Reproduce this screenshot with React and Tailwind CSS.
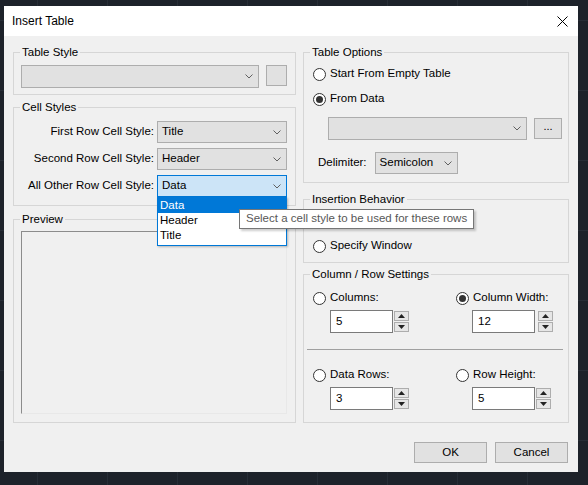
import React from "react";

function Chevron() {
  return (
    <svg width="8" height="5" viewBox="0 0 8 5" className="shrink-0">
      <path d="M0.5 0.5 L4 4 L7.5 0.5" fill="none" stroke="#606060" strokeWidth="1" />
    </svg>
  );
}

function Combo({ value, className = "", active = false }) {
  return (
    <div
      className={`flex items-center justify-between border pl-[4px] pr-[5px] ${
        active ? "bg-[#cce4f7] border-[#0078d7]" : "bg-[#e1e1e1] border-[#adadad]"
      } ${className}`}
    >
      <span className="leading-none">{value}</span>
      <Chevron />
    </div>
  );
}

function Radio({ checked, label }) {
  return (
    <div className="flex h-[16px] items-center gap-[4px]">
      <div className="flex h-[13px] w-[13px] items-center justify-center rounded-full border border-[#333] bg-white">
        {checked && <div className="h-[7px] w-[7px] rounded-full bg-[#333]" />}
      </div>
      {label && <span>{label}</span>}
    </div>
  );
}

function Tri({ up }) {
  return (
    <svg width="7" height="4" viewBox="0 0 7 4">
      <path d={up ? "M0 4 L3.5 0 L7 4 Z" : "M0 0 L3.5 4 L7 0 Z"} fill="#222" />
    </svg>
  );
}

function Spinner({ value, spinGap = "ml-px" }) {
  return (
    <div className="flex h-[23px]">
      <div className="flex h-full w-[63px] items-center border border-[#7a7a7a] bg-white pl-[5px]">
        {value}
      </div>
      <div className={`flex h-full w-[15px] flex-col gap-px py-[1px] ${spinGap}`}>
        <div className="flex flex-1 items-center justify-center border border-[#adadad] bg-[#e6e6e6]">
          <Tri up />
        </div>
        <div className="flex flex-1 items-center justify-center border border-[#adadad] bg-[#e6e6e6]">
          <Tri />
        </div>
      </div>
    </div>
  );
}

function Group({ title, className = "", inner = "", children }) {
  return (
    <fieldset className={`border border-[#d6d6d6] ${className}`}>
      <legend className="ml-[6px] px-[2px] leading-[14px]">{title}</legend>
      <div className={inner}>{children}</div>
    </fieldset>
  );
}

export default function App() {
  return (
    <div className="relative h-[485px] w-[588px] overflow-hidden bg-[#1d222a] bg-[image:linear-gradient(to_right,#272d36_1px,transparent_1px),linear-gradient(to_bottom,#272d36_1px,transparent_1px)] bg-[size:70px_70px] bg-[position:37px_20px] pl-[4px] pt-[6px] font-['Liberation_Sans',Arial,sans-serif] text-[11.5px] text-black">
      <div className="flex h-[466px] w-[574px] flex-col bg-[#f0f0f0]">
        {/* Title bar */}
        <div className="flex h-[30px] items-center justify-between bg-white pl-[8px] pr-[10px]">
          <span className="text-[12px]">Insert Table</span>
          <svg width="11" height="11" viewBox="0 0 11 11">
            <path d="M0.5 0.5 L10.5 10.5 M10.5 0.5 L0.5 10.5" stroke="#000" strokeWidth="1" />
          </svg>
        </div>

        <div className="flex flex-1 flex-col px-[9px] pt-[9px]">
          <div className="flex gap-[7px]">
            {/* Left column */}
            <div className="flex w-[283px] flex-col">
              <Group title="Table Style" className="h-[50px]" inner="pl-[7px] pt-[6px]">
                <div className="flex items-start gap-[7px]">
                  <Combo value="" className="h-[23px] w-[238px]" />
                  <div className="h-[21px] w-[21px] border border-[#adadad] bg-[#e1e1e1]" />
                </div>
              </Group>

              <Group title="Cell Styles" className="mt-[5px] h-[106px]" inner="pr-[8px] pt-[7px]">
                <div className="flex flex-col gap-[5px]">
                  <div className="flex items-center justify-end gap-[3px]">
                    <span>First Row Cell Style:</span>
                    <Combo value="Title" className="h-[22px] w-[130px]" />
                  </div>
                  <div className="flex items-center justify-end gap-[3px]">
                    <span>Second Row Cell Style:</span>
                    <Combo value="Header" className="h-[22px] w-[130px]" />
                  </div>
                  <div className="flex items-center justify-end gap-[3px]">
                    <span>All Other Row Cell Style:</span>
                    <div className="relative">
                      <Combo value="Data" active className="h-[22px] w-[130px]" />
                      <div className="absolute left-0 top-full z-10 flex w-[130px] flex-col border border-[#0078d7] bg-white pb-[2px] shadow-[1px_1px_2px_rgba(0,0,0,0.25)]">
                        <div className="flex h-[15px] items-center bg-[#0078d7] pl-[2px] text-white">Data</div>
                        <div className="flex h-[15px] items-center pl-[2px]">Header</div>
                        <div className="flex h-[15px] items-center pl-[2px]">Title</div>
                      </div>
                    </div>
                  </div>
                </div>
              </Group>

              <Group title="Preview" className="mt-[6px] h-[211px]" inner="pl-[7px] pr-[8px] pt-[5px]">
                <div className="h-[183px] border border-b-[#e8e8e8] border-l-[#8c8c8c] border-r-[#e8e8e8] border-t-[#8c8c8c]" />
              </Group>
            </div>

            {/* Right column */}
            <div className="flex w-[266px] flex-col">
              <Group title="Table Options" className="h-[138px]" inner="pl-[9px] pt-[7px]">
                <div className="flex flex-col gap-[9px]">
                  <Radio label="Start From Empty Table" />
                  <Radio checked label="From Data" />
                </div>
                <div className="mt-[10px] flex items-center gap-[7px] pl-[15px]">
                  <Combo value="" className="h-[23px] w-[199px]" />
                  <div className="flex h-[21px] w-[28px] items-center justify-center border border-[#adadad] bg-[#e1e1e1] pb-[4px] text-[11px]">
                    ...
                  </div>
                </div>
                <div className="mt-[12px] flex items-center gap-[8px] pl-[5px]">
                  <span>Delimiter:</span>
                  <Combo value="Semicolon" className="h-[22px] w-[83px]" />
                </div>
              </Group>

              <Group title="Insertion Behavior" className="mt-[9px] h-[71px]" inner="pl-[9px] pt-[7px]">
                <div className="flex flex-col gap-[9px]">
                  <Radio />
                  <Radio label="Specify Window" />
                </div>
              </Group>

              <Group title="Column / Row Settings" className="mt-[4px] h-[156px]" inner="pl-[9px] pr-[5px] pt-[9px]">
                <div className="grid grid-cols-[143px_1fr]">
                  <div className="flex flex-col gap-[4px]">
                    <Radio label="Columns:" />
                    <div className="pl-[17px]">
                      <Spinner value="5" />
                    </div>
                  </div>
                  <div className="flex flex-col gap-[4px]">
                    <Radio checked label="Column Width:" />
                    <div className="pl-[16px]">
                      <Spinner value="12" spinGap="ml-[3px]" />
                    </div>
                  </div>
                </div>
                <div className="ml-[-6px] mt-[16px] h-px bg-[#a0a0a0]" />
                <div className="mt-[17px] grid grid-cols-[143px_1fr]">
                  <div className="flex flex-col gap-[4px]">
                    <Radio label="Data Rows:" />
                    <div className="pl-[17px]">
                      <Spinner value="3" />
                    </div>
                  </div>
                  <div className="flex flex-col gap-[4px]">
                    <Radio label="Row Height:" />
                    <div className="pl-[16px]">
                      <Spinner value="5" />
                    </div>
                  </div>
                </div>
              </Group>
            </div>
          </div>

          <div className="mt-[19px] flex justify-end gap-[8px] pr-[1px]">
            <button className="flex h-[21px] w-[73px] items-center justify-center border border-[#adadad] bg-[#e1e1e1]">
              OK
            </button>
            <button className="flex h-[21px] w-[73px] items-center justify-center border border-[#adadad] bg-[#e1e1e1]">
              Cancel
            </button>
          </div>
        </div>
      </div>

      {/* Tooltip */}
      <div className="absolute left-[239px] top-[209px] z-20 flex h-[20px] items-center border border-[#767676] bg-white px-[6px] text-[#575757] shadow-[2px_2px_2px_rgba(0,0,0,0.2)]">
        Select a cell style to be used for these rows
      </div>
    </div>
  );
}
